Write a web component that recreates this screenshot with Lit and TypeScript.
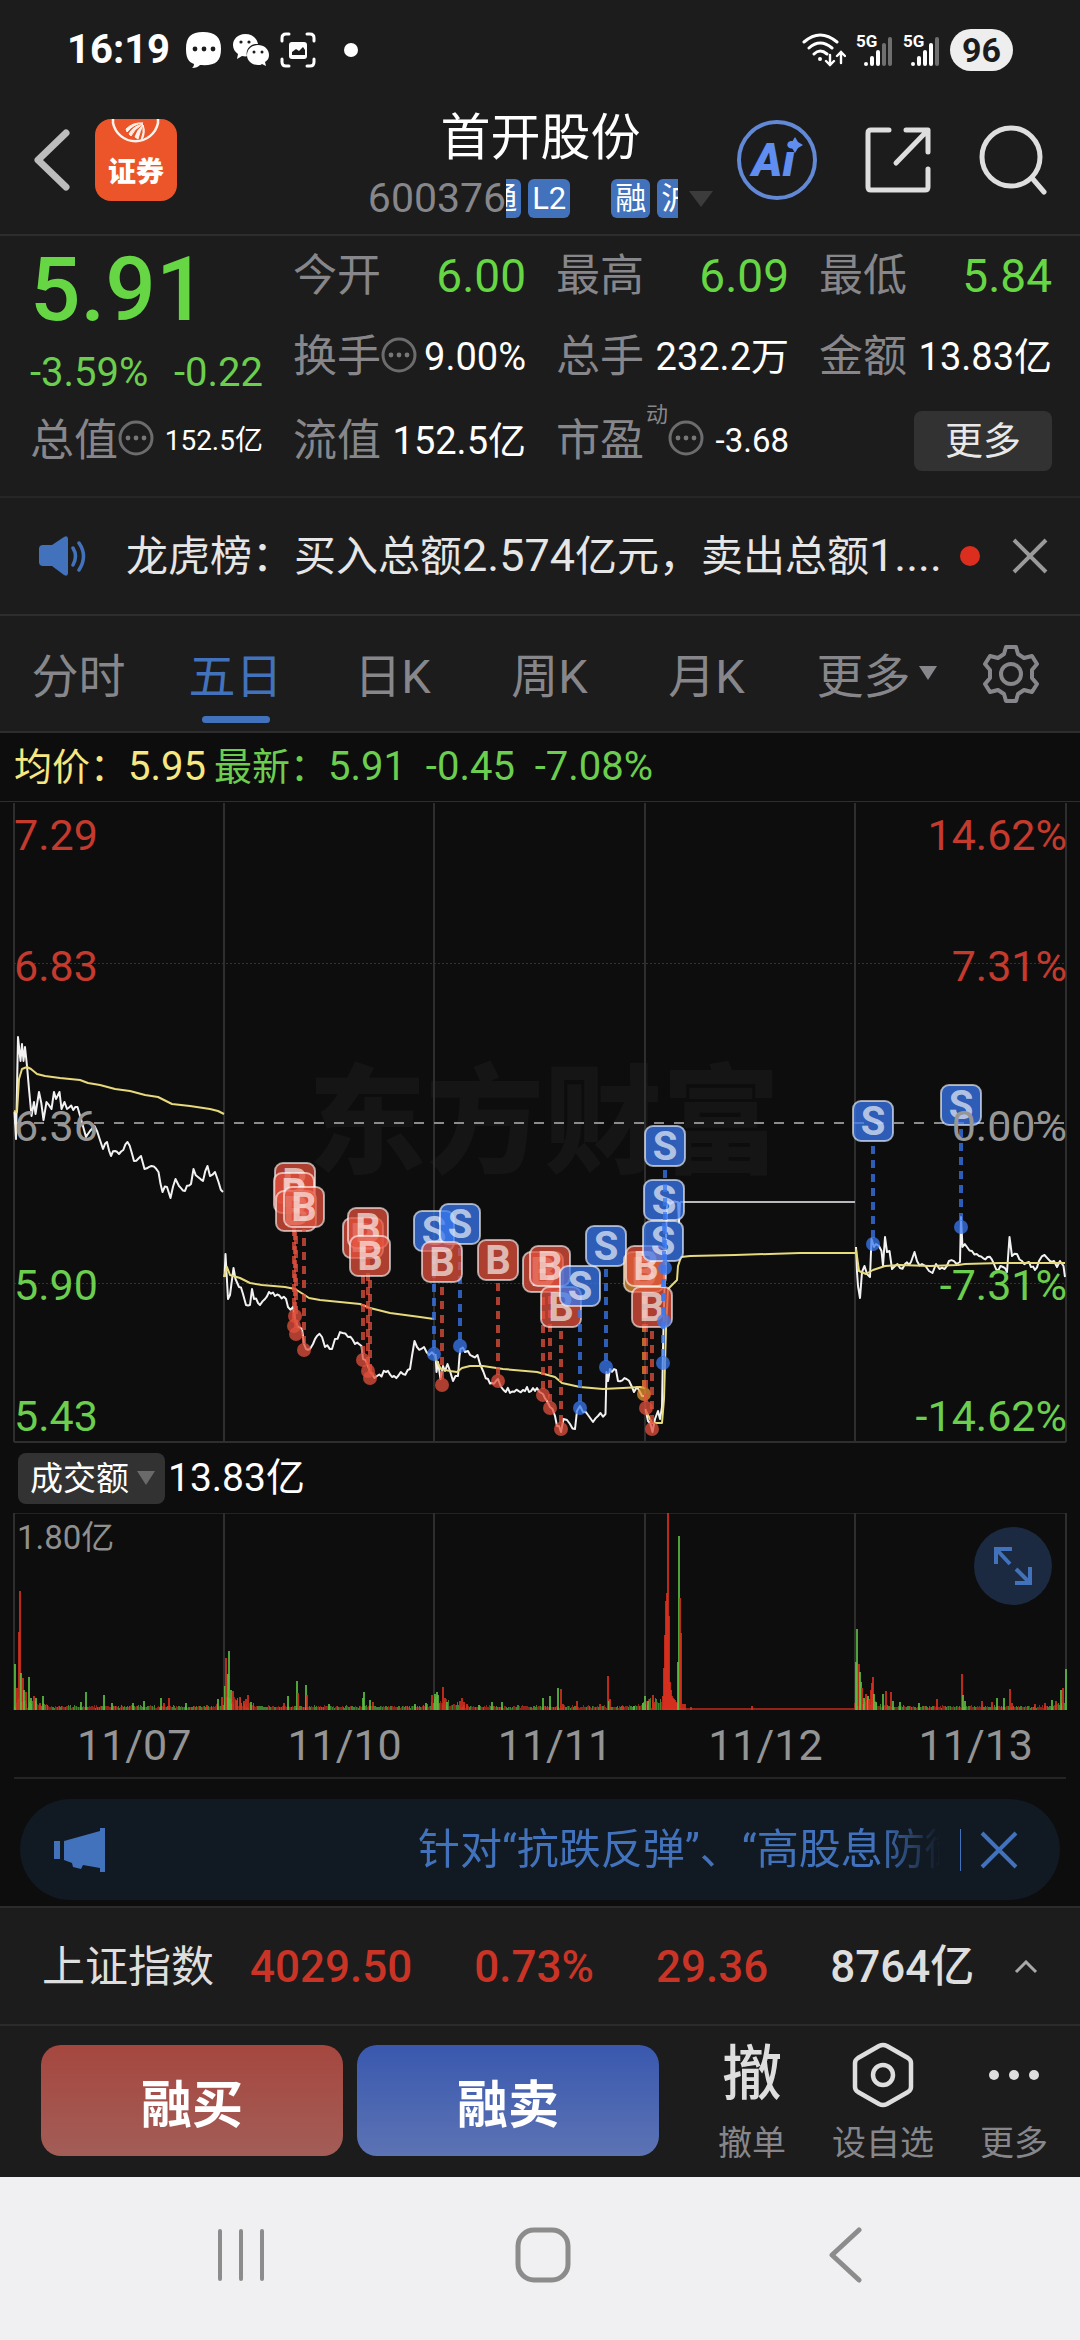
import { LitElement, html, svg, css } from "lit";
import { customElement, property } from "lit/decorators.js";

type Point = [number, number];

const toPoints = (pts: Point[]) => pts.map((p) => p.join(",")).join(" ");

/* Small deterministic generator, so that the texture of the lines is stable. */
const makeRandom = (seed: number) => () => {
  seed = (seed * 16807) % 2147483647;
  return seed / 2147483647;
};

const roughen = (pts: Point[], amount: number, seed: number): Point[] => {
  const rnd = makeRandom(seed);
  const out: Point[] = [];
  for (let i = 0; i < pts.length - 1; i++) {
    const [x0, y0] = pts[i];
    const [x1, y1] = pts[i + 1];
    out.push(pts[i]);
    const n = Math.floor((x1 - x0) / 2);
    for (let k = 1; k < n; k++) {
      const t = k / n;
      const y = y0 + (y1 - y0) * t + (rnd() - 0.5) * amount;
      out.push([Math.round((x0 + (x1 - x0) * t) * 10) / 10, Math.round(y * 10) / 10]);
    }
  }
  out.push(pts[pts.length - 1]);
  return out;
};

const PRICE: Point[][] = [
  [
    [14.5, 1113], [16, 1140], [18, 1038], [20.5, 1062], [22, 1045], [23.5, 1062], [25, 1048], [27, 1067], [29, 1090],
    [31.5, 1117], [34, 1103], [35.5, 1115], [39, 1093], [43.5, 1121], [46.5, 1103], [51.5, 1110], [54, 1093], [56, 1100],
    [59.5, 1093], [61.5, 1110], [64.5, 1103], [67, 1110], [77.5, 1108], [81, 1120], [86, 1138], [90, 1132], [94.5, 1127],
    [100, 1141], [103, 1150], [107, 1143], [111, 1157], [115, 1152], [119, 1155], [127.5, 1143], [134, 1162], [141, 1157],
    [144.5, 1170], [151.5, 1167], [158.5, 1173], [162.5, 1193], [167, 1188], [170.5, 1199], [175.5, 1180], [179, 1187],
    [185, 1192], [191, 1185], [193.5, 1170], [198, 1178], [203, 1182], [207.5, 1167], [210, 1177], [215, 1173],
    [218.5, 1183], [223, 1193],
  ],
  [
    [224.5, 1278], [225.5, 1255], [228, 1300], [230, 1296], [233.5, 1269], [235.5, 1280], [239, 1288], [243, 1295],
    [246, 1306], [250, 1306], [252, 1290], [254, 1300], [260, 1306], [265, 1300], [269, 1293], [275, 1297], [286, 1300],
    [288, 1308], [293, 1308], [295, 1320], [298, 1328], [302, 1330], [304, 1345], [306, 1350], [310, 1350], [313, 1345],
    [317, 1337], [322, 1338], [325, 1348], [332, 1350], [335, 1340], [342.5, 1334], [348, 1338], [355, 1345],
    [361.5, 1347], [363, 1360], [368, 1367], [372, 1375], [377, 1377], [386, 1373], [394, 1377], [403, 1375],
    [410, 1370], [412, 1357], [414.5, 1342], [417, 1348], [424, 1348], [429, 1356], [434.5, 1356],
  ],
  [
    [435.5, 1355], [436.5, 1373], [438, 1363], [440.5, 1380], [443, 1367], [445, 1372], [447.5, 1365], [450, 1372],
    [453, 1382], [455.5, 1377], [458, 1377], [459.5, 1357], [460.5, 1350], [465, 1353], [468, 1352], [472, 1357],
    [477.5, 1356], [480, 1365], [483.5, 1373], [488, 1380], [492, 1384], [498, 1380], [503.5, 1391], [523, 1391],
    [537, 1389], [539.5, 1393], [543, 1395], [547, 1402], [550, 1408], [555, 1417], [557, 1427], [561, 1433],
    [563.5, 1420], [567, 1421], [570, 1425], [575, 1430], [577, 1412], [580, 1407], [583, 1413], [588, 1416],
    [593, 1423], [598, 1417], [605.5, 1415], [606.5, 1373], [608, 1382], [610, 1370], [616, 1371], [618, 1382],
    [626.5, 1380], [631.5, 1387], [634, 1393], [637, 1388], [640, 1393], [644, 1397],
  ],
  [
    [645.5, 1410], [648, 1422], [652.5, 1433], [655, 1420], [658, 1412], [660, 1420], [662, 1408], [663, 1350],
    [664.5, 1290], [666, 1240], [667, 1207], [668, 1203], [678, 1203], [679, 1224], [680, 1203],
  ],
  [
    [856, 1248], [857, 1273], [858, 1287], [860, 1299], [862, 1273], [864.5, 1267], [867, 1275], [870, 1278],
    [871.5, 1240], [874, 1248], [876, 1245], [879, 1247], [881.5, 1252], [883, 1267], [885, 1238], [887, 1253],
    [889.5, 1252], [892, 1270], [895, 1267], [900, 1269], [905, 1265], [911, 1263], [914.5, 1253], [917, 1262],
    [922, 1265], [925.5, 1267], [929, 1272], [932.5, 1274], [936, 1265], [939.5, 1270], [944.5, 1270], [949, 1262],
    [956.5, 1265], [960, 1263], [961, 1218], [962.5, 1248], [967, 1248], [972, 1252], [979, 1257], [987.5, 1258],
    [994, 1265], [998, 1272], [1003, 1268], [1007, 1273], [1009.5, 1238], [1012, 1257], [1017, 1255], [1022, 1262],
    [1029, 1263], [1035, 1271], [1039, 1262], [1044.5, 1256], [1050, 1262], [1054, 1262], [1057, 1268], [1060, 1262],
    [1063.5, 1267], [1065, 1278],
  ],
];

const AVERAGE: Point[][] = [
  [
    [14, 1112], [17, 1113], [19, 1080], [22, 1070], [27, 1068], [31, 1070], [37, 1075], [45, 1077], [60, 1079],
    [80, 1081], [88, 1084], [100, 1086], [115, 1090], [130, 1092], [145, 1096], [158, 1098], [172, 1105], [190, 1107],
    [210, 1110], [218, 1112], [224, 1115],
  ],
  [
    [224, 1278], [227, 1268], [230, 1276], [240, 1279], [250, 1284], [262, 1286], [285, 1288], [295, 1290], [303, 1295],
    [309, 1299], [320, 1301], [340, 1303], [360, 1305], [370, 1309], [390, 1314], [420, 1318], [434, 1320],
  ],
  [
    [435, 1357], [437, 1363], [441, 1370], [450, 1372], [457, 1373], [462, 1369], [470, 1367], [483, 1367], [503, 1370],
    [537, 1373], [555, 1378], [562, 1384], [580, 1388], [603, 1390], [623, 1389], [640, 1388], [645, 1389],
  ],
  [
    [646, 1412], [652, 1424], [662, 1424], [664, 1400], [666, 1330], [668, 1290], [672, 1286], [677, 1281], [678, 1267],
    [681, 1258], [690, 1257], [735, 1256], [800, 1254], [855, 1254],
  ],
  [
    [856, 1250], [859, 1272], [866, 1275], [873, 1271], [885, 1267], [900, 1266], [930, 1267], [958, 1266], [965, 1265],
    [1000, 1264], [1065, 1264],
  ],
];

interface Trade {
  side: "B" | "S";
  tone: "buy" | "sell" | "mixed";
  x: number;
  top: number;
  dot: number;
}

const trade = (side: "B" | "S", x: number, top: number, dot: number, tone?: Trade["tone"]): Trade => ({
  side, x, top, dot, tone: tone ?? (side === "B" ? "buy" : "sell"),
});

const TRADES: Trade[] = [
  trade("B", 295, 1184, 1317), trade("B", 294, 1194, 1327), trade("B", 296, 1212, 1335), trade("B", 304, 1208, 1351),
  trade("B", 363, 1239, 1361), trade("B", 368, 1229, 1372), trade("B", 370, 1257, 1379),
  trade("S", 434, 1232, 1355), trade("S", 460, 1225, 1347), trade("B", 442, 1263, 1386), trade("B", 498, 1261, 1382),
  trade("B", 543, 1273, 1396), trade("B", 550, 1267, 1409), trade("B", 561, 1308, 1430), trade("S", 580, 1287, 1409),
  trade("S", 606, 1247, 1368),
  trade("B", 644, 1273, 1395, "mixed"), trade("B", 646, 1267, 1409), trade("B", 652, 1308, 1430),
  trade("S", 663, 1242, 1364), trade("S", 664, 1201, 1322), trade("S", 665, 1147, 1269),
  trade("S", 873, 1122, 1245), trade("S", 961, 1106, 1228),
];

const COLUMNS = [14, 224, 434, 645, 855, 1066];

/* x, height, colour: g = falling minute, r = rising minute */
type Bar = [number, number, "g" | "r"];
const PEAKS: Bar[] = [
  [14, 46, "g"], [16, 22, "r"], [18, 78, "r"], [19, 119, "r"], [20, 37, "g"], [22, 32, "r"], [23, 20, "g"], [25, 18, "r"],
  [28, 33, "g"], [30, 12, "g"], [33, 14, "r"], [35, 12, "g"], [39, 7, "r"], [42, 14, "g"], [80, 8, "g"], [85, 18, "g"],
  [103, 15, "g"], [111, 7, "g"], [132, 7, "g"], [143, 9, "g"], [160, 12, "g"], [163, 7, "r"], [168, 12, "r"],
  [185, 7, "g"], [206, 5, "r"], [217, 11, "g"], [221, 13, "r"],
  [224, 24, "g"], [225, 52, "r"], [227, 36, "g"], [228, 59, "g"], [230, 20, "g"], [232, 19, "r"], [235, 10, "r"],
  [239, 13, "r"], [243, 9, "r"], [245, 11, "r"], [247, 15, "r"], [250, 8, "g"], [283, 7, "r"], [287, 14, "g"],
  [296, 29, "g"], [297, 17, "r"], [305, 25, "g"], [306, 15, "r"], [328, 6, "g"], [362, 12, "g"], [363, 18, "g"],
  [369, 10, "g"], [372, 8, "r"], [414, 6, "g"], [425, 7, "g"], [431, 15, "r"], [434, 16, "g"],
  [436, 18, "g"], [437, 15, "g"], [442, 23, "r"], [444, 12, "r"], [446, 8, "g"], [459, 9, "r"], [461, 12, "r"],
  [463, 8, "r"], [466, 6, "r"], [478, 5, "g"], [491, 8, "g"], [501, 8, "g"], [542, 12, "g"], [549, 14, "g"],
  [557, 22, "g"], [560, 21, "r"], [562, 6, "r"], [576, 9, "r"], [599, 6, "r"], [607, 34, "r"], [608, 9, "g"],
  [609, 11, "r"], [622, 4, "r"], [633, 4, "g"], [642, 7, "g"], [644, 14, "g"], [647, 9, "g"],
  [652, 15, "r"], [654, 8, "r"], [662, 14, "r"], [663, 42, "r"], [664, 75, "r"], [665, 109, "r"], [666, 117, "r"],
  [667, 197, "r"], [668, 94, "r"], [669, 28, "r"], [670, 20, "r"], [671, 14, "r"], [672, 12, "r"], [673, 11, "r"],
  [674, 10, "r"], [675, 8, "r"], [676, 7, "r"], [677, 48, "g"], [678, 174, "g"], [679, 112, "r"], [680, 77, "r"],
  [682, 6, "r"], [684, 6, "r"], [690, 3, "r"], [751, 4, "r"],
  [855, 48, "g"], [856, 81, "g"], [858, 46, "r"], [859, 38, "g"], [860, 28, "g"], [861, 22, "r"], [863, 12, "g"],
  [865, 16, "r"], [867, 14, "g"], [868, 10, "r"], [870, 20, "r"], [871, 27, "r"], [872, 33, "r"], [873, 16, "g"],
  [875, 8, "g"], [882, 16, "g"], [885, 19, "r"], [890, 18, "r"], [892, 9, "g"], [899, 8, "g"], [918, 7, "g"],
  [936, 11, "r"], [961, 36, "r"], [962, 15, "g"], [964, 9, "g"], [981, 9, "r"], [991, 8, "r"], [996, 12, "g"],
  [1003, 12, "g"], [1009, 21, "r"], [1011, 7, "r"], [1034, 6, "r"], [1044, 7, "r"], [1051, 10, "g"], [1055, 9, "r"],
  [1060, 20, "g"], [1062, 22, "r"], [1065, 41, "g"],
];

const BASE_BARS: Bar[] = (() => {
  const rnd = makeRandom(77);
  const bars: Bar[] = [];
  for (let x = 14; x < 1066; x++) {
    if (x > 662 && x < 854) {
      bars.push([x, 2, "r"]);
      continue;
    }
    const since = (x - 14) % 210;
    const boost = since < 40 ? (40 - since) / 3 : since > 196 ? (since - 196) / 2 : 1;
    const h = 2 + rnd() * 2 + rnd() * boost;
    bars.push([x, Math.round(h), rnd() > 0.48 ? "r" : "g"]);
  }
  return bars;
})();

const fontStack = css`Roboto, "Noto Sans CJK SC", sans-serif`;

@customElement("price-chart")
export class PriceChart extends LitElement {
  static styles = css`
    :host { display: block; }
    .plot { display: block; width: 100%; font-family: ${fontStack}; }
    .frame { stroke: #2e2e2e; stroke-width: 2; fill: none; }
    .dots { stroke: #333; stroke-width: 1; stroke-dasharray: 2 2; }
    .zero { stroke: #8c8c8c; stroke-width: 2; stroke-dasharray: 10 10; }
    .watermark { fill: #151515; font-size: 118px; font-weight: 900; }
    .price { fill: none; stroke: #f2f2f2; stroke-width: 2; stroke-linejoin: round; }
    .average { fill: none; stroke: #e6da7c; stroke-width: 2; stroke-linejoin: round; }
    .limit { stroke: #b9b7bd; stroke-width: 2; }
    .axis { font-size: 43px; }
    .end { text-anchor: end; }
    .up { fill: #c43a2d; }
    .flat { fill: #969696; }
    .down { fill: #6cce4e; }
    .stem { stroke-width: 4; stroke-dasharray: 8 6; }
    .box { stroke: #ffffff; stroke-opacity: 0.6; stroke-width: 2; }
    .letter { fill: #ffffff; fill-opacity: 0.65; font-size: 40px; font-weight: 700; text-anchor: middle; }
    .buy { fill: #e2503c; stroke: #e2503c; opacity: 0.75; }
    .sell { fill: #3a78f0; stroke: #3a78f0; opacity: 0.75; }
    .mixed { fill: #e8912e; stroke: #e8912e; opacity: 0.75; }
    .tile { stroke: none; }
  `;

  render() {
    const labels = [
      ["7.29", "14.62%", 851, "up"],
      ["6.83", "7.31%", 982, "up"],
      ["6.36", "0.00%", 1142, "flat"],
      ["5.90", "-7.31%", 1301, "down"],
      ["5.43", "-14.62%", 1432, "down"],
    ] as const;
    return html`<svg class="plot" viewBox="0 803 1080 641" role="img" aria-label="五日分时走势">
      <text class="watermark" x="308" y="1165">东方财富</text>
      <path class="frame" d="M14 1443H1066" />
      ${COLUMNS.map((x) => svg`<path class="frame" d="M${x} 804V1443" />`)}
      <path class="dots" d="M14 964.5H1066" /><path class="dots" d="M14 1284.5H1066" />
      <path class="zero" d="M14 1124H1066" />
      ${PRICE.map((day, i) => svg`<polyline class="price" points=${toPoints(roughen(day, 6, 11 + i))} />`)}
      <path class="limit" d="M680 1203H855" />
      ${AVERAGE.map((day) => svg`<polyline class="average" points=${toPoints(day)} />`)}
      ${TRADES.map((t) => svg`
        <path class="stem ${t.tone}" d="M${t.x} ${t.dot - 6}V${t.top + 22}" />
        <circle class="tile ${t.tone}" cx=${t.x} cy=${t.dot} r="7" />
        <rect class="tile ${t.tone}" x=${t.x - 20} y=${t.top - 20} width="40" height="40" rx="8" />
        <rect class="box" fill="none" x=${t.x - 20} y=${t.top - 20} width="40" height="40" rx="8" />
        <text class="letter" x=${t.x} y=${t.top + 14}>${t.side}</text>`)}
      ${labels.map(([left, right, y, tone]) => svg`
        <text class="axis ${tone}" x="14" y=${y}>${left}</text>
        <text class="axis end ${tone}" x="1067" y=${y}>${right}</text>`)}
    </svg>`;
  }
}

@customElement("volume-chart")
export class VolumeChart extends LitElement {
  static styles = css`
    :host { display: block; }
    .plot { display: block; width: 100%; font-family: ${fontStack}; }
    .frame { stroke: #2e2e2e; stroke-width: 2; fill: none; }
    .edge { stroke: #232323; stroke-width: 1; }
    .g { fill: #5cbf42; opacity: 0.85; }
    .r { fill: #d8301f; opacity: 0.85; }
    .soft { opacity: 0.65; }
    .max { fill: #8f8f8f; font-size: 33px; }
  `;

  render() {
    return html`<svg class="plot" viewBox="0 1514 1080 198" role="img" aria-label="成交额">
      <path class="edge" d="M14 1514.5H1066" />
      ${COLUMNS.map((x) => svg`<path class="frame" d="M${x} 1514V1711" />`)}
      ${BASE_BARS.map(([x, h, c]) => svg`<rect class="soft ${c}" x=${x} y=${1711 - h} width="1" height=${h} />`)}
      ${PEAKS.map(([x, h, c]) => svg`<rect class=${c} x=${x} y=${1711 - h} width="2" height=${h} />`)}
      <text class="max" x="17" y="1550">1.80亿</text>
    </svg>`;
  }
}

@customElement("quote-field")
export class QuoteField extends LitElement {
  @property() label = "";
  @property() value = "";
  @property() note = "";
  @property() size = "normal";
  @property({ type: Boolean }) info = false;

  static styles = css`
    :host { display: flex; align-items: center; min-width: 0; white-space: nowrap; }
    .label { font-size: 44px; line-height: 60px; color: #87878b; }
    .note { font-size: 22px; line-height: 24px; align-self: flex-start; padding: 4px 0 0 2px; color: #87878b; }
    .info { width: 36px; height: 36px; margin: 0 0 5px; flex: none; }
    .value { margin-left: auto; font-size: 38px; line-height: 60px; color: #fff; }
    .lead { font-size: 46px; color: #66d644; }
    .small { font-size: 28px; }
    .medium { font-size: 33px; }
  `;

  render() {
    return html`<span class="label">${this.label}</span>
      ${this.note ? html`<span class="note">${this.note}</span>` : null}
      ${this.info
        ? html`<svg class="info" viewBox="0 0 36 36" aria-hidden="true">
            <circle cx="18" cy="18" r="16" fill="none" stroke="#6c6c6e" stroke-width="3" />
            <g fill="#77777a"><circle cx="10" cy="18" r="2.4" /><circle cx="18" cy="18" r="2.4" /><circle cx="26" cy="18" r="2.4" /></g>
          </svg>`
        : null}
      <span class="value ${this.size}">${this.value}</span>`;
  }
}

@customElement("app-root")
export class AppRoot extends LitElement {
  static styles = css`
    :host { display: block; min-height: 100vh; background: #f0f0f2; color: #fff; font-family: ${fontStack}; }
    * { box-sizing: border-box; }
    svg { display: block; flex: none; }
    button { font: inherit; color: inherit; background: none; border: 0; padding: 0; margin: 0; cursor: pointer; }
    .top { background: #1c1c1c; }

    .status { display: flex; align-items: center; justify-content: space-between; padding: 22px 67px; height: 100px; }
    .status-side { display: flex; align-items: center; gap: 10px; }
    .clock { font-size: 40px; font-weight: 700; line-height: 56px; margin-right: 5px; }
    .more-dot { width: 14px; height: 14px; border-radius: 50%; background: #fff; margin-left: 18px; }
    .signal { font-size: 17px; font-weight: 700; overflow: visible; }
    .battery { background: #eee; color: #1c1c1c; border-radius: 21px; padding: 0 12px; font-size: 34px; font-weight: 700; line-height: 42px; }

    .header { display: grid; grid-template-columns: 1fr auto 1fr; padding: 8px 33px 16px 34px; border-bottom: 2px solid #2d2d2d; }
    .tools { display: flex; align-items: center; height: 104px; }
    .tools-left { gap: 25px; }
    .tools-right { justify-content: flex-end; gap: 48px; }
    .logo-text { fill: #fff; font-size: 28px; font-weight: 900; text-anchor: middle; }
    .ai-text { fill: #5f8df0; font-size: 46px; font-weight: 900; font-style: italic; }
    .title { margin: 0; font-size: 50px; font-weight: 400; line-height: 60px; text-align: center; }
    .code { display: flex; align-items: center; padding-top: 11px; }
    .ticker { font-size: 41px; line-height: 39px; color: #87878b; }
    .tags { display: flex; gap: 7px; width: 172px; overflow: hidden; }
    .tag { flex: none; border-radius: 6px; background: #4272bb; padding: 0 4px; font-size: 31px; line-height: 39px; }
    .tag-first { margin-left: -24px; }
    .tag-apart { margin-left: 34px; }
    .down { width: 0; height: 0; border: 12px solid transparent; border-top: 16px solid #3c3c3c; border-bottom: 0; margin-left: 11px; }

    .quote { display: grid; grid-template-columns: repeat(4, 1fr); grid-template-rows: 79px 84px 83px; column-gap: 30px; padding: 0 28px 14px 30px; border-bottom: 2px solid #262626; }
    .last { grid-row: span 2; color: #66d644; white-space: nowrap; }
    .last-price { font-size: 89px; font-weight: 500; line-height: 108px; }
    .last-change { display: flex; justify-content: space-between; font-size: 40px; line-height: 58px; color: #6cce4e; }
    .quote-more { justify-self: end; align-self: center; width: 138px; border-radius: 8px; background: #323232; color: #e8e8e8; font-size: 38px; line-height: 60px; }

    .news { display: flex; align-items: center; padding: 0 32px 0 38px; height: 118px; border-bottom: 2px solid #2d2d2d; }
    .news-text { flex: 1; margin-left: 38px; font-size: 42px; line-height: 60px; color: #e6e6e6; white-space: nowrap; overflow: hidden; }
    .news-number { font-size: 45px; }
    .news-dot { width: 20px; height: 20px; border-radius: 50%; background: #dc2e1e; margin: 0 32px 0 16px; }

    .tabs { display: flex; border-bottom: 2px solid #2d2d2d; }
    .tab { flex: 157; height: 115px; padding-bottom: 2px; display: flex; align-items: center; justify-content: center; position: relative; font-size: 47px; color: #87878b; white-space: nowrap; }
    .tab-active { color: #4272bb; }
    .tab-active::after { content: ""; position: absolute; left: 50%; bottom: 8px; width: 68px; height: 7px; margin-left: -34px; border-radius: 4px; background: #4272bb; }
    .tab-arrow { position: absolute; left: 100%; top: 50%; margin: -8px 0 0 -23px; border: 9px solid transparent; border-top: 14px solid #87878b; border-bottom: 0; }
    .gear { flex: 138; display: flex; align-items: center; justify-content: center; }

    .board { background: #0d0d0d; padding-bottom: 6px; }
    .legend { display: flex; gap: 8px; padding: 0 14px; font-size: 40px; line-height: 68px; color: #6cce4e; border-bottom: 1px solid #2e2e2e; white-space: pre; }
    .legend-average { color: #f7e781; }
    .legend-name { font-size: 38px; }
    .volume-head { display: flex; align-items: center; gap: 3px; height: 70px; padding-left: 18px; font-size: 39px; line-height: 60px; }
    .picker { display: flex; align-items: center; gap: 8px; padding: 0 10px 0 12px; border-radius: 8px; background: #323232; font-size: 33px; line-height: 51px; }
    .picker-arrow { border: 9px solid transparent; border-top: 14px solid #6a6a6a; border-bottom: 0; }
    .volume { position: relative; }
    .expand { position: absolute; right: 28px; top: 14px; width: 78px; height: 78px; border-radius: 50%; background: #1b2a40; display: flex; align-items: center; justify-content: center; }
    .dates { display: grid; grid-template-columns: repeat(5, 1fr); margin: 0 14px; border-bottom: 2px solid #242424; font-size: 43px; line-height: 64px; color: #949494; text-align: center; }
    .date { padding-left: 30px; padding-top: 2px; }

    .promo { display: flex; align-items: center; margin: 20px 20px 0; padding: 0 42px 0 34px; height: 101px; border-radius: 51px; background: #111922; color: #4272bb; }
    .promo-text { flex: 1; margin-left: 51px; padding-left: 261px; font-size: 42px; line-height: 60px; white-space: nowrap; overflow: hidden; -webkit-mask-image: linear-gradient(to right, #000 92%, transparent); mask-image: linear-gradient(to right, #000 92%, transparent); }
    .promo-rule { width: 1px; height: 42px; background: #4272bb; margin: 0 19px; }

    .index { display: flex; align-items: center; padding: 2px 42px 0 42px; height: 118px; border-top: 2px solid #2b2b2b; color: #dedede; line-height: 60px; white-space: nowrap; }
    .index-name { font-size: 43px; margin-right: 36px; }
    .figure { font-size: 44px; font-weight: 500; color: #c93426; margin-right: 62px; }
    .turnover { font-size: 44px; font-weight: 500; margin-right: auto; }
    .actions { display: flex; align-items: flex-start; padding: 19px 32px 12px 41px; border-top: 2px solid #2b2b2b; }
    .deal { flex: 302; height: 111px; border-radius: 20px; font-size: 51px; font-weight: 700; margin-right: 14px; }
    .deal-buy { background: linear-gradient(#a5473f, #a35d57); }
    .deal-sell { background: linear-gradient(#3958ae, #5c73b4); }
    .action { display: flex; flex-direction: column; align-items: center; font-size: 34px; line-height: 44px; color: #87878b; white-space: nowrap; }
    .action-icon { height: 60px; margin-bottom: 16px; display: flex; align-items: center; color: #dedede; }
    .action-glyph { font-size: 60px; font-weight: 500; line-height: 60px; }
    .shortcuts { flex: 330; display: flex; justify-content: space-between; margin-left: 45px; }

    .nav { display: grid; grid-template-columns: repeat(3, 1fr); align-items: center; justify-items: center; height: 162px; padding: 0 84px 6px 90px; }
  `;

  private renderSignal(strong: number) {
    return html`<svg class="signal" width="37" height="36" viewBox="0 0 37 36" aria-hidden="true">
      <text x="0" y="15" fill="#fff">5G</text>
      ${[4, 10, 16, 23, 29].map((h, i) => svg`<rect x=${8 + i * 6} y=${34 - h} width="4" height=${h} rx="2"
        fill=${i < strong ? "#fff" : "#6f6f6f"} />`)}
    </svg>`;
  }

  private renderStatus() {
    return html`<div class="status">
      <div class="status-side">
        <span class="clock">16:19</span>
        <svg width="37" height="38" viewBox="0 0 37 38" aria-hidden="true">
          <path fill="#fff" d="M18 1C6 1 1 6 1 18c0 8 2 13 8 15 0 2-1 3-2 4 4 0 6-1 8-3 15 1 21-3 21-16C36 6 30 1 18 1Z" />
          <g fill="#1c1c1c"><circle cx="10" cy="18" r="2.4" /><circle cx="19" cy="18" r="2.4" /><circle cx="28" cy="18" r="2.4" /></g>
        </svg>
        <svg width="38" height="34" viewBox="0 0 38 34" aria-hidden="true">
          <path fill="#fff" d="M13 1C6 1 1 6 1 12c0 4 2 7 5 9l-1 5 5-3c2 .5 4 .5 5 .3C13 16 19 10 26 11 25 5 20 1 13 1Z" />
          <path fill="#fff" d="M26 12c-6 0-11 4-11 10s5 10 11 10c2 0 3 0 4-1l4 2-1-4c3-2 4-4 4-7 0-6-5-10-11-10Z" />
          <g fill="#1c1c1c"><circle cx="9" cy="9" r="1.6" /><circle cx="17" cy="9" r="1.6" /><circle cx="22" cy="19" r="1.5" /><circle cx="30" cy="19" r="1.5" /></g>
        </svg>
        <svg width="36" height="36" viewBox="0 0 36 36" fill="none" stroke="#fff" stroke-width="3" stroke-linecap="round" aria-hidden="true">
          <path d="M2 9V6q0-4 4-4h3M27 2h3q4 0 4 4v3M34 27v3q0 4-4 4h-3M9 34H6q-4 0-4-4v-3" />
          <rect x="9" y="10" width="18" height="17" rx="3" fill="#fff" stroke="none" />
          <path d="M12 23v-3l4-3 3 2 4-4 2 3v5Z" fill="#1c1c1c" stroke="none" />
        </svg>
        <span class="more-dot"></span>
      </div>
      <div class="status-side">
        <svg width="44" height="34" viewBox="0 0 44 34" fill="none" stroke="#fff" stroke-width="3" stroke-linecap="round" aria-hidden="true">
          <path d="M2 9q16-14 33 0M7 15q11-10 23 0M12 21q6-6 13 0" />
          <circle cx="18" cy="26" r="2" fill="#fff" stroke="none" />
          <path d="M28 22v10M24 28l4 4 4-4M39 30V20M35 23l4-4 4 4" stroke-width="2.4" />
        </svg>
        ${this.renderSignal(3)} ${this.renderSignal(4)}
        <span class="battery">96</span>
      </div>
    </div>`;
  }

  private renderHeader() {
    return html`<header class="header">
      <div class="tools tools-left">
        <button aria-label="返回">
          <svg width="36" height="62" viewBox="0 0 36 62"><path d="M32 4 4 31l28 27" fill="none" stroke="#bdbdbd" stroke-width="7" stroke-linecap="round" stroke-linejoin="round" /></svg>
        </button>
        <button aria-label="证券">
          <svg width="82" height="82" viewBox="0 0 82 82">
            <rect width="82" height="82" rx="16" fill="#eb5529" />
            <path d="M18 0v4a23 23 0 0 0 45 0v-4" fill="none" stroke="#fff3ec" stroke-width="2.5" />
            <path d="M31 10q7-7 17-6-10 1-16 9ZM34 15q4-8 14-10-9 5-12 12ZM40 18q2-7 8-12-3 6-5 14ZM46 21q3-7 2-15 3 7-1 15Z" fill="#fff3ec" stroke="#fff3ec" stroke-width="1" />
            <text class="logo-text" x="41" y="63">证券</text>
          </svg>
        </button>
      </div>
      <div>
        <h1 class="title">首开股份</h1>
        <div class="code">
          <span class="ticker">600376</span>
          <div class="tags">
            <span class="tag tag-first">通</span><span class="tag">L2</span>
            <span class="tag tag-apart">融</span><span class="tag">沪</span>
          </div>
          <span class="down"></span>
        </div>
      </div>
      <div class="tools tools-right">
        <button aria-label="AI">
          <svg width="80" height="80" viewBox="0 0 80 80">
            <circle cx="40" cy="40" r="38" fill="none" stroke="#6289d6" stroke-width="4" />
            <text class="ai-text" x="15" y="56">Ai</text>
            <path d="m58 17 3 5 5 3-5 3-3 5-3-5-5-3 5-3Z" fill="#5f8df0" />
          </svg>
        </button>
        <button aria-label="分享">
          <svg width="66" height="68" viewBox="0 0 66 68" fill="none" stroke="#dedede" stroke-width="5" stroke-linecap="round" stroke-linejoin="round">
            <path d="M24 4H6q-3 0-3 3v54q0 3 3 3h54q3 0 3-3V43M41 4h22v22M62 5 31 37" />
          </svg>
        </button>
        <button aria-label="搜索">
          <svg width="68" height="70" viewBox="0 0 68 70" fill="none" stroke="#dedede" stroke-width="5" stroke-linecap="round">
            <circle cx="32" cy="32" r="29" /><path d="m53 53 12 14" />
          </svg>
        </button>
      </div>
    </header>`;
  }

  private renderQuote() {
    return html`<section class="quote">
      <div class="last">
        <div class="last-price">5.91</div>
        <div class="last-change"><span>-3.59%</span><span>-0.22</span></div>
      </div>
      <quote-field label="今开" value="6.00" size="lead"></quote-field>
      <quote-field label="最高" value="6.09" size="lead"></quote-field>
      <quote-field label="最低" value="5.84" size="lead"></quote-field>
      <quote-field label="换手" value="9.00%" info></quote-field>
      <quote-field label="总手" value="232.2万"></quote-field>
      <quote-field label="金额" value="13.83亿"></quote-field>
      <quote-field label="总值" value="152.5亿" size="small" info></quote-field>
      <quote-field label="流值" value="152.5亿"></quote-field>
      <quote-field label="市盈" note="动" value="-3.68" size="medium" info></quote-field>
      <button class="quote-more">更多</button>
    </section>`;
  }

  private renderTabs() {
    const tabs = ["分时", "五日", "日K", "周K", "月K", "更多"];
    return html`<nav class="tabs">
      ${tabs.map((t) => html`<button class="tab ${t === "五日" ? "tab-active" : ""}">
        ${t}${t === "更多" ? html`<span class="tab-arrow"></span>` : null}
      </button>`)}
      <button class="gear" aria-label="设置">
        <svg width="60" height="60" viewBox="0 0 60 60" fill="none" stroke="#87878b" stroke-width="4" stroke-linejoin="round">
          <path d="M25 3h10l2 7 6 4 8-2 5 8-5 6v8l5 6-5 8-8-2-6 4-2 7H25l-2-7-6-4-8 2-5-8 5-6v-8l-5-6 5-8 8 2 6-4Z" />
          <circle cx="30" cy="30" r="10" />
        </svg>
      </button>
    </nav>`;
  }

  render() {
    return html`
      <div class="top">
        ${this.renderStatus()} ${this.renderHeader()} ${this.renderQuote()}
        <section class="news">
          <svg width="50" height="42" viewBox="0 0 50 42" aria-hidden="true">
            <path fill="#4272bb" d="M5 10h9L26 2q4-2 4 2v34q0 4-4 2l-12-9H5q-4 0-4-4V14q0-4 4-4Z" />
            <path d="M35 13q5 8 0 17M41 8q9 13 0 27" fill="none" stroke="#4272bb" stroke-width="3.5" stroke-linecap="round" />
          </svg>
          <span class="news-text">龙虎榜：买入总额<span class="news-number">2.574</span>亿元，卖出总额<span class="news-number">1....</span></span>
          <span class="news-dot"></span>
          <button aria-label="关闭">
            <svg width="36" height="36" viewBox="0 0 36 36"><path d="m2 2 32 32M34 2 2 34" stroke="#9a9a9a" stroke-width="4" /></svg>
          </button>
        </section>
        ${this.renderTabs()}
      </div>
      <main class="board">
        <div class="legend"><span class="legend-average"><span class="legend-name">均价：</span>5.95</span><span><span class="legend-name">最新：</span>5.91  -0.45  -7.08%</span></div>
        <price-chart></price-chart>
        <div class="volume-head">
          <button class="picker">成交额<span class="picker-arrow"></span></button>
          <span>13.83亿</span>
        </div>
        <div class="volume">
          <volume-chart></volume-chart>
          <button class="expand" aria-label="全屏">
            <svg width="40" height="40" viewBox="0 0 40 40" fill="none" stroke="#4272bb" stroke-width="4">
              <path d="M3 18V3h16M4 4l13 14M22 37h15V21M36 36 23 23" />
            </svg>
          </button>
        </div>
        <div class="dates">${["11/07", "11/10", "11/11", "11/12", "11/13"].map((d) => html`<span class="date">${d}</span>`)}</div>
        <aside class="promo">
          <svg width="52" height="46" viewBox="0 0 52 46" fill="#4272bb" aria-hidden="true">
            <path d="M0 14h6v18H0ZM10 14 46 4V1h5v44h-5v-4l-17-3-2 4-8-2-1-4-8-3Z" />
          </svg>
          <span class="promo-text">针对“抗跌反弹”、“高股息防御</span>
          <span class="promo-rule"></span>
          <button aria-label="关闭提示">
            <svg width="38" height="38" viewBox="0 0 38 38"><path d="m2 2 34 34M36 2 2 36" stroke="#4272bb" stroke-width="4" /></svg>
          </button>
        </aside>
      </main>
      <footer class="top">
        <div class="index">
          <span class="index-name">上证指数</span><span class="figure">4029.50</span><span class="figure">0.73%</span>
          <span class="figure">29.36</span><span class="turnover">8764亿</span>
          <svg width="24" height="14" viewBox="0 0 24 14" aria-hidden="true"><path d="M2 12 12 2l10 10" fill="none" stroke="#a8a8a8" stroke-width="3" /></svg>
        </div>
        <div class="actions">
          <button class="deal deal-buy">融买</button>
          <button class="deal deal-sell">融卖</button>
          <div class="shortcuts">
            <button class="action"><span class="action-icon action-glyph">撤</span>撤单</button>
            <button class="action">
              <span class="action-icon"><svg width="62" height="66" viewBox="0 0 62 66" fill="none" stroke="#dedede" stroke-width="4.5" stroke-linejoin="round">
                <path d="M27 4q4-2 8 0l21 12q3 2 3 5v24q0 3-3 5L35 62q-4 2-8 0L6 50q-3-2-3-5V21q0-3 3-5Z" />
                <circle cx="31" cy="33" r="10" />
              </svg></span>设自选
            </button>
            <button class="action">
              <span class="action-icon"><svg width="52" height="66" viewBox="0 0 52 66" fill="#dedede"><circle cx="6" cy="33" r="5" /><circle cx="26" cy="33" r="5" /><circle cx="46" cy="33" r="5" /></svg></span>更多
            </button>
          </div>
        </div>
      </footer>
      <nav class="nav">
        <button aria-label="最近任务">
          <svg width="48" height="54" viewBox="0 0 48 54"><path d="M3 3v48M24 3v48M45 3v48" stroke="#8c8c8c" stroke-width="4" stroke-linecap="round" /></svg>
        </button>
        <button aria-label="主页">
          <svg width="56" height="56" viewBox="0 0 56 56"><rect x="3" y="3" width="50" height="50" rx="16" fill="none" stroke="#8c8c8c" stroke-width="5" /></svg>
        </button>
        <button aria-label="后退">
          <svg width="36" height="56" viewBox="0 0 36 56"><path d="M32 3 5 28l27 25" fill="none" stroke="#8c8c8c" stroke-width="5" stroke-linecap="round" stroke-linejoin="round" /></svg>
        </button>
      </nav>`;
  }
}
